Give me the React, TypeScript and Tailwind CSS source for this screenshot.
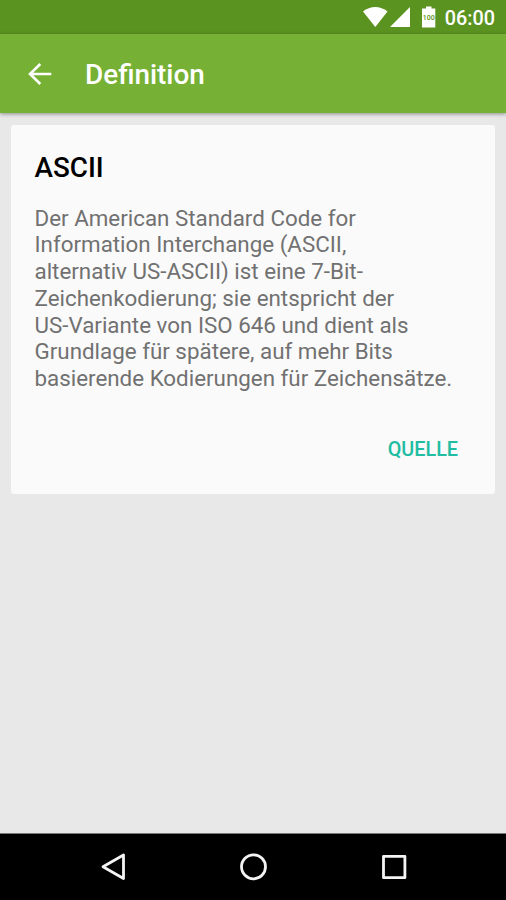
function StatusBar() {
  return (
    <div className="flex h-[34px] shrink-0 items-center justify-end bg-[#5b9321] pr-[11px] text-white">
      <svg width="77" height="34" viewBox="0 0 77 34" fill="currentColor">
        <path d="M3 11.500C10 5.500 20.500 5.500 27.500 11.500L15.300 27Z" />
        <path d="M50 7V27H30Z" />
        <path d="M66 6.500h5.500v2h3.800V27.500H62V8.500h4z" />
        <text x="68.700" y="19.500" fontSize="7" fontWeight="500" textAnchor="middle" textLength="12" fill="#5b9321">100</text>
      </svg>
      <span className="ml-[7.500px] mt-[3px] text-[19.800px] font-medium leading-none">06:00</span>
    </div>
  );
}

const definitionLines = [
  'Der American Standard Code for',
  'Information Interchange (ASCII,',
  'alternativ US-ASCII) ist eine 7-Bit-',
  'Zeichenkodierung; sie entspricht der',
  'US-Variante von ISO 646 und dient als',
  'Grundlage für spätere, auf mehr Bits',
  'basierende Kodierungen für Zeichensätze.',
];

export default function App() {
  return (
    <div className="flex h-[900px] w-[506px] flex-col overflow-hidden bg-[#e8e8e8] font-['Roboto',sans-serif]">
      <StatusBar />
      <header className="flex h-[79px] shrink-0 items-center bg-[#76b034] pl-[28px] text-white shadow-[0_1px_4px_rgba(0,0,0,0.4)]">
        <svg width="24" height="24" viewBox="0 0 24 24" fill="none" stroke="currentColor" strokeWidth="2.600">
          <path d="M23.300 12H2.500M12.300 2L2 12L12.300 22" />
        </svg>
        <h1 className="mt-[3px] ml-[33px] text-[27.900px] font-medium leading-none">Definition</h1>
      </header>
      <main className="flex-1 px-[11px] pt-3">
        <article className="flex h-[368.500px] flex-col rounded-[3px] bg-[#fafafa] pr-6 pl-[23.500px] pt-[25px]">
          <h2 className="text-[27.800px] font-medium leading-[36px] text-black">ASCII</h2>
          <p className="mt-[18.500px] text-[22.370px] leading-[26.800px] whitespace-nowrap text-[#717171]">
            {definitionLines.map((line) => (
              <span key={line} className="block">{line}</span>
            ))}
          </p>
          <button className="mt-[44.500px] mr-[13px] self-end text-[19.800px] font-medium leading-[26px] text-[#20bda2]">QUELLE</button>
        </article>
      </main>
      <nav className="h-[67px] shrink-0 border-t border-[#777] bg-black">
        <svg width="506" height="66" viewBox="0 1 506 66" fill="none" stroke="#f4f4f4" strokeWidth="2.800" strokeLinejoin="round">
          <path d="M123.500 22V45.500L103 33.800Z" />
          <circle cx="253.500" cy="33.800" r="12" />
          <path d="M383.500 23.300h21.400v21.400h-21.400z" />
        </svg>
      </nav>
    </div>
  );
}
